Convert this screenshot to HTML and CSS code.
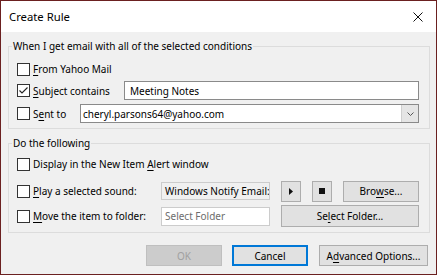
FILE: index.html
```html
<!DOCTYPE html>
<html>
<head>
<meta charset="utf-8">
<title>Create Rule</title>
<link rel="stylesheet" href="styles.css">
</head>
<body>
<div class="window">
  <div class="titlebar">
    <span class="title">Create Rule</span>
    <svg class="close" viewBox="0 0 10 10"><path d="M0.5 0.5 L9.5 9.5 M9.5 0.5 L0.5 9.5" stroke="#111" stroke-width="1" fill="none"/></svg>
  </div>
  <div class="body">
    <fieldset class="group g1">
      <legend>When I get email with all of the selected conditions</legend>
      <div class="row r1">
        <label class="cb"><span class="box"></span><span><u>F</u>rom Yahoo Mail</span></label>
      </div>
      <div class="row r2">
        <label class="cb l2"><span class="box"><svg viewBox="0 0 11 11" class="tick"><path d="M1.5 5.5 L4 8 L9.5 2.5" stroke="#222" stroke-width="1.1" fill="none"/></svg></span><span><u>S</u>ubject contains</span></label>
        <div class="text grow t1">Meeting Notes</div>
      </div>
      <div class="row r3">
        <label class="cb l3"><span class="box"></span><span>S<u>e</u>nt to</span></label>
        <div class="combo grow"><span class="combo-val">cheryl.parsons64@yahoo.com</span><span class="drop"><svg viewBox="0 0 7 4" class="chev"><path d="M0.5 0.5 L3.5 3.5 L6.5 0.5" stroke="#555" stroke-width="1" fill="none"/></svg></span></div>
      </div>
    </fieldset>
    <fieldset class="group g2">
      <legend>Do the following</legend>
      <div class="row a1">
        <label class="cb"><span class="box"></span><span>Display in the New Item <u>A</u>lert window</span></label>
      </div>
      <div class="grid">
        <label class="cb"><span class="box"></span><span><u>P</u>lay a selected sound:</span></label>
        <div class="text dis snd">Windows Notify Email:</div>
        <div class="btn sq"><svg viewBox="0 0 4 7" class="play"><path d="M0 0 L4 3.5 L0 7 Z" fill="#111"/></svg></div>
        <div class="btn sq"><span class="stop"></span></div>
        <div class="btn">Bro<u>w</u>se...</div>
        <label class="cb"><span class="box"></span><span><u>M</u>ove the item to folder:</span></label>
        <div class="text dis fld">Select Folder</div>
        <div class="btn wide">Se<u>l</u>ect Folder...</div>
      </div>
    </fieldset>
    <div class="actions">
      <div class="btn act ok">OK</div>
      <div class="btn act cancel">Cancel</div>
      <div class="btn act adv">A<u>d</u>vanced Options...</div>
    </div>
  </div>
</div>
</body>
</html>
```
FILE: styles.css
```css
* { box-sizing: border-box; }
html, body { margin: 0; padding: 0; }
body {
  font-family: "Noto Sans", "Open Sans", sans-serif;
  font-size: 10px;
  color: #000;
  background: #fff;
}
u { text-decoration-thickness: 1px; text-underline-offset: 2px; }
.window {
  width: 437px;
  height: 275px;
  border: 1px solid #6b2020;
  background: #f0f0f0;
  display: flex;
  flex-direction: column;
  overflow: hidden;
}
.titlebar {
  height: 31px;
  flex: none;
  background: #fff;
  display: flex;
  align-items: center;
  justify-content: space-between;
  padding: 0 13px 0 8px;
}
.title { font-size: 11.3px; line-height: 16px; }
.close { width: 10px; height: 10px; display: block; }
.body {
  padding: 6px 6px 0 7px;
  display: flex;
  flex-direction: column;
}
.group {
  margin: 0;
  min-width: 0;
  border: 1px solid #dcdcdc;
  padding: 5px 10px 4px 8px;
}
.group legend {
  padding: 0 1px;
  margin-left: -5px;
  line-height: 16px;
  font-size: 10px;
}
.g2 { margin-top: 6px; padding-top: 3px; padding-bottom: 5px; }
.row { display: flex; align-items: center; }
.r1 { height: 20px; }
.r2 { height: 21px; margin-top: 1px; }
.r3 { height: 21px; margin-top: 2px; }
.a1 { height: 20px; }
.cb {
  display: flex;
  align-items: center;
  gap: 3px;
  white-space: nowrap;
}
.l2 { width: 107px; flex: none; }
.l3 { width: 63px; flex: none; }
.box {
  width: 13px;
  height: 13px;
  flex: none;
  border: 1px solid #333;
  background: #fff;
  display: flex;
  align-items: center;
  justify-content: center;
}
.tick { width: 11px; height: 11px; display: block; }
.text {
  height: 19px;
  border: 1px solid #8a8a8a;
  background: #fff;
  padding: 0 5px;
  display: flex;
  align-items: center;
  white-space: nowrap;
  overflow: hidden;
}
.grow { flex: 1; }
.combo {
  height: 19px;
  border: 1px solid #8a8a8a;
  background: #fff;
  display: flex;
  align-items: center;
  padding-left: 2px;
}
.combo-val { flex: 1; white-space: nowrap; }
.drop {
  width: 17px;
  height: 17px;
  background: #e5e5e5;
  border-left: 1px solid #cfcfcf;
  display: flex;
  align-items: center;
  justify-content: center;
}
.chev { width: 7px; height: 4px; display: block; }
.grid {
  margin-top: 6px;
  display: grid;
  grid-template-columns: 133px 109px 20px 20px 76px;
  grid-template-rows: 22px 22px;
  column-gap: 11px;
  row-gap: 3px;
  align-items: center;
}
.dis {
  height: 18px;
  border-color: #cccccc;
  background: #f0f0f0;
  padding: 0 3px;
}
.fld { color: #6d6d6d; background: #fff; height: 19px; }
.btn {
  height: 21px;
  border: 1px solid #adadad;
  background: #e1e1e1;
  display: flex;
  align-items: center;
  justify-content: center;
  white-space: nowrap;
}
.sq { width: 20px; }
.play { width: 4px; height: 7px; display: block; }
.stop { width: 6px; height: 6px; background: #111; display: block; }
.wide { grid-column: 3 / 6; height: 22px; }
.actions {
  margin-top: 12px;
  display: flex;
  justify-content: flex-end;
  padding-right: 2px;
}
.act { height: 21px; }
.ok { width: 76px; background: #cccccc; border-color: #bfbfbf; color: #a0a0a0; }
.cancel { width: 76px; margin-left: 10px; border: 2px solid #0078d7; }
.adv { width: 109px; margin-left: 11px; }
```
